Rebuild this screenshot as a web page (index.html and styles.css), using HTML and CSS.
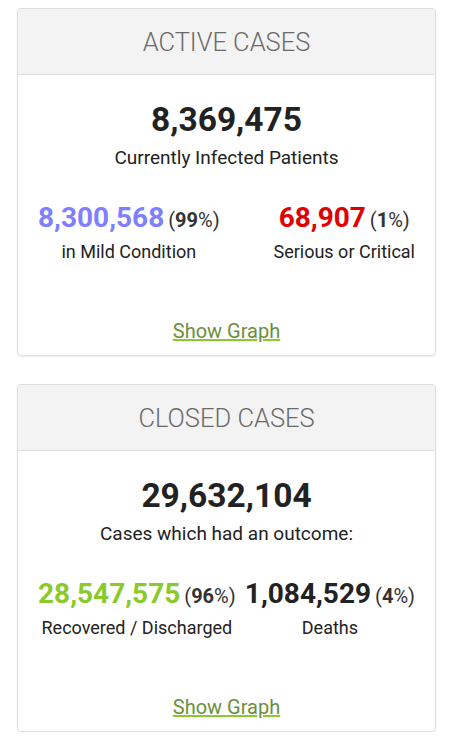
FILE: index.html
```html
<!DOCTYPE html>
<html>
<head>
<meta charset="utf-8">
<link rel="stylesheet" href="styles.css">
</head>
<body>
<div class="page">
  <div class="card">
    <div class="card-head">Active Cases</div>
    <div class="card-body">
      <div class="main-num">8,369,475</div>
      <div class="main-label">Currently Infected Patients</div>
      <div class="split">
        <div class="col">
          <div class="line"><span class="num mild">8,300,568</span> <span class="pct">(<b>99</b>%)</span></div>
          <div class="lbl">in Mild Condition</div>
        </div>
        <div class="col">
          <div class="line"><span class="num serious">68,907</span> <span class="pct">(<b>1</b>%)</span></div>
          <div class="lbl">Serious or Critical</div>
        </div>
      </div>
      <a class="graph" href="#">Show Graph</a>
    </div>
  </div>
  <div class="card">
    <div class="card-head">Closed Cases</div>
    <div class="card-body">
      <div class="main-num">29,632,104</div>
      <div class="main-label">Cases which had an outcome:</div>
      <div class="split">
        <div class="col">
          <div class="line"><span class="num recovered">28,547,575</span> <span class="pct">(<b>96</b>%)</span></div>
          <div class="lbl">Recovered / Discharged</div>
        </div>
        <div class="col">
          <div class="line"><span class="num">1,084,529</span> <span class="pct">(<b>4</b>%)</span></div>
          <div class="lbl">Deaths</div>
        </div>
      </div>
      <a class="graph" href="#">Show Graph</a>
    </div>
  </div>
</div>
</body>
</html>
```
FILE: styles.css
```css
html, body {
  margin: 0;
  padding: 0;
  background: #fff;
  font-family: Roboto, "Liberation Sans", sans-serif;
  color: #222;
}
.page {
  padding: 8px 13px 0 17px;
  display: flex;
  flex-direction: column;
  gap: 28px;
}
.card {
  border: 1px solid #ddd;
  border-radius: 4px;
  box-shadow: 0 1px 2px rgba(0,0,0,0.06);
  overflow: hidden;
}
.card-head {
  height: 65px;
  background: #f3f3f3;
  border-bottom: 1px solid #dedede;
  display: flex;
  align-items: center;
  justify-content: center;
  text-transform: uppercase;
  font-weight: 300;
  font-size: 25.5px;
  color: #6a6a6a;
}
.card-body {
  display: flex;
  flex-direction: column;
  align-items: center;
  padding: 25px 0 11px;
}
.main-num {
  font-weight: 700;
  font-size: 33.5px;
  line-height: 40px;
  color: #222;
}
.main-label {
  font-size: 19px;
  line-height: 24px;
  margin-top: 6px;
}
.split {
  align-self: stretch;
  display: flex;
  justify-content: space-between;
  padding: 0 20px;
  margin-top: 31px;
}
.col {
  text-align: center;
}
.line {
  line-height: 34px;
  white-space: nowrap;
}
.num {
  font-weight: 700;
  font-size: 28px;
}
.mild { color: #8080ff; }
.serious { color: #e00000; }
.recovered { color: #8aca2b; }
.pct {
  font-size: 20px;
  color: #333;
}
.pct b { font-weight: 700; }
.lbl {
  font-size: 18px;
  line-height: 24px;
  margin-top: 1px;
}
.graph {
  margin-top: 54px;
  font-size: 20px;
  line-height: 26px;
  color: #6a8f3a;
  text-decoration: underline;
  text-decoration-color: #8aca2b;
}
```
